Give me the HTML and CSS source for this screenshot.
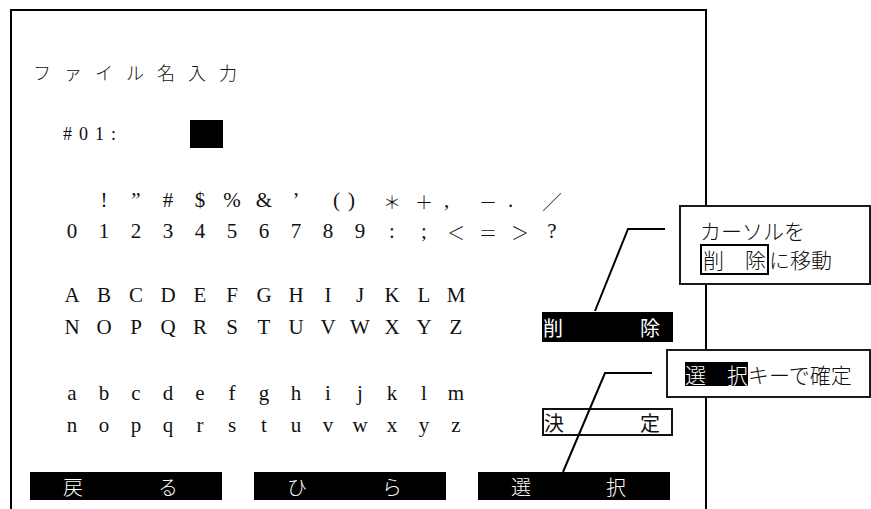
FILE: index.html
```html
<!DOCTYPE html>
<html>
<head>
  <title>ファイル名入力</title>
  <link rel="stylesheet" href="styles.css">
</head>
<body>

  <div class="screen">
    <div class="title">ファイル名入力</div>

    <div class="fileno">
      <span class="label">#01:</span>
      <span class="cursor"></span>
    </div>

    <div class="group sym">
      <div class="row">
        <span class="cell"></span><span class="cell">!</span><span class="cell">”</span><span class="cell">#</span>
        <span class="cell">$</span><span class="cell">%</span><span class="cell">&amp;</span><span class="cell">’</span>
        <span class="cell r">(</span><span class="cell l">)</span><span class="cell op">＊</span><span class="cell op">＋</span>
        <span class="cell l">,</span><span class="cell op">－</span><span class="cell l">.</span><span class="cell op">╱</span>
      </div>
      <div class="row">
        <span class="cell">0</span><span class="cell">1</span><span class="cell">2</span><span class="cell">3</span>
        <span class="cell">4</span><span class="cell">5</span><span class="cell">6</span><span class="cell">7</span>
        <span class="cell">8</span><span class="cell">9</span><span class="cell">:</span><span class="cell">;</span>
        <span class="cell op">＜</span><span class="cell op">＝</span><span class="cell op">＞</span><span class="cell">?</span>
      </div>
    </div>

    <div class="group upper">
      <div class="row">
        <span class="cell">A</span><span class="cell">B</span><span class="cell">C</span><span class="cell">D</span>
        <span class="cell">E</span><span class="cell">F</span><span class="cell">G</span><span class="cell">H</span>
        <span class="cell">I</span><span class="cell">J</span><span class="cell">K</span><span class="cell">L</span>
        <span class="cell">M</span>
      </div>
      <div class="row">
        <span class="cell">N</span><span class="cell">O</span><span class="cell">P</span><span class="cell">Q</span>
        <span class="cell">R</span><span class="cell">S</span><span class="cell">T</span><span class="cell">U</span>
        <span class="cell">V</span><span class="cell">W</span><span class="cell">X</span><span class="cell">Y</span>
        <span class="cell">Z</span>
        <div class="key dark"><span>削</span><span>除</span></div>
      </div>
    </div>

    <div class="group lower">
      <div class="row">
        <span class="cell">a</span><span class="cell">b</span><span class="cell">c</span><span class="cell">d</span>
        <span class="cell">e</span><span class="cell">f</span><span class="cell">g</span><span class="cell">h</span>
        <span class="cell">i</span><span class="cell">j</span><span class="cell">k</span><span class="cell">l</span>
        <span class="cell">m</span>
      </div>
      <div class="row">
        <span class="cell">n</span><span class="cell">o</span><span class="cell">p</span><span class="cell">q</span>
        <span class="cell">r</span><span class="cell">s</span><span class="cell">t</span><span class="cell">u</span>
        <span class="cell">v</span><span class="cell">w</span><span class="cell">x</span><span class="cell">y</span>
        <span class="cell">z</span>
        <div class="key outline"><span>決</span><span>定</span></div>
      </div>
    </div>

    <div class="nav">
      <div class="navbtn"><span>戻</span><span>る</span></div>
      <div class="navbtn"><span>ひ</span><span>ら</span></div>
      <div class="navbtn"><span>選</span><span>択</span></div>
    </div>
  </div>

  <div class="callout move">
    <div>カーソルを</div>
    <div><span class="boxed">削　除</span>に移動</div>
  </div>

  <div class="callout ok">
    <span class="inv">選　択</span>キーで確定
  </div>

  <svg class="leaders" width="871" height="509" viewBox="0 0 871 509">
    <polyline points="665,229 628,229 595,311" />
    <polyline points="652,373 605,373 563,472" />
  </svg>

</body>
</html>
```

FILE: styles.css
```css
body {
  margin: 0;
  background: #fff;
  color: #111;
  font-family: "Noto Sans CJK JP", sans-serif;
}

.screen {
  margin: 9px 0 0 10px;
  width: 693px;
  height: 498px;
  border: 2px solid #000;
  border-bottom: none;
}

.title {
  margin-top: 49px;
  padding-left: 21px;
  font-size: 18px;
  font-weight: 300;
  line-height: 24px;
  letter-spacing: 13px;
}

.fileno {
  display: flex;
  align-items: center;
  margin-top: 36px;
  padding-left: 51px;
  height: 28px;
}

.fileno .label {
  width: 127px;
  font-family: "Liberation Serif", serif;
  font-size: 18px;
  letter-spacing: 7px;
}

.cursor {
  width: 33px;
  height: 28px;
  background: #000;
}

.group {
  padding-left: 44px;
}
.sym { margin-top: 37px; }
.upper { margin-top: 32px; }
.lower { margin-top: 34px; }

.row {
  display: flex;
  align-items: center;
  height: 32px;
}
.sym .row { height: 31px; }

.cell {
  width: 32px;
  text-align: center;
  font-family: "Liberation Serif", "Noto Sans CJK JP", serif;
  font-size: 21px;
}
.cell.l { text-align: left; padding-left: 4px; width: 28px; }
.cell.r { text-align: right; padding-right: 4px; width: 28px; }
.cell.op {
  font-size: 18px;
  font-weight: 300;
}

.key {
  display: flex;
  justify-content: space-between;
  align-items: center;
  box-sizing: border-box;
  margin-left: 70px;
  width: 131px;
  height: 30px;
  padding: 0 13px 0 1px;
  font-size: 20px;
}
.key.dark {
  background: #000;
  color: #fff;
}
.key.outline {
  height: 28px;
  border: 2px solid #111;
  margin-top: -6px;
  padding-left: 0;
  padding-right: 11px;
}

.nav {
  display: flex;
  gap: 32px;
  margin-top: 31px;
  padding-left: 18px;
}

.navbtn {
  display: flex;
  justify-content: space-between;
  align-items: center;
  box-sizing: border-box;
  width: 192px;
  height: 28px;
  padding: 0 44px 0 33px;
  background: #000;
  color: #fff;
  font-size: 20px;
  font-weight: 300;
}

/* callouts lie over the frame */
.callout {
  position: absolute;
  box-sizing: border-box;
  background: #fff;
  border: 2px solid #1a1a1a;
  font-size: 21px;
  font-weight: 300;
  color: #111;
}

.move {
  left: 679px;
  top: 205px;
  width: 192px;
  height: 80px;
  padding: 9px 0 0 19px;
  line-height: 28px;
}

.boxed {
  display: inline-block;
  border: 2px solid #000;
  line-height: 27px;
  padding: 0 1px;
}

.ok {
  left: 666px;
  top: 349px;
  width: 205px;
  height: 49px;
  display: flex;
  align-items: center;
  padding-left: 17px;
}

.inv {
  display: inline-block;
  background: #000;
  color: #fff;
  line-height: 24px;
}

.leaders {
  position: absolute;
  left: 0;
  top: 0;
  pointer-events: none;
}
.leaders polyline {
  fill: none;
  stroke: #000;
  stroke-width: 2;
}
```
